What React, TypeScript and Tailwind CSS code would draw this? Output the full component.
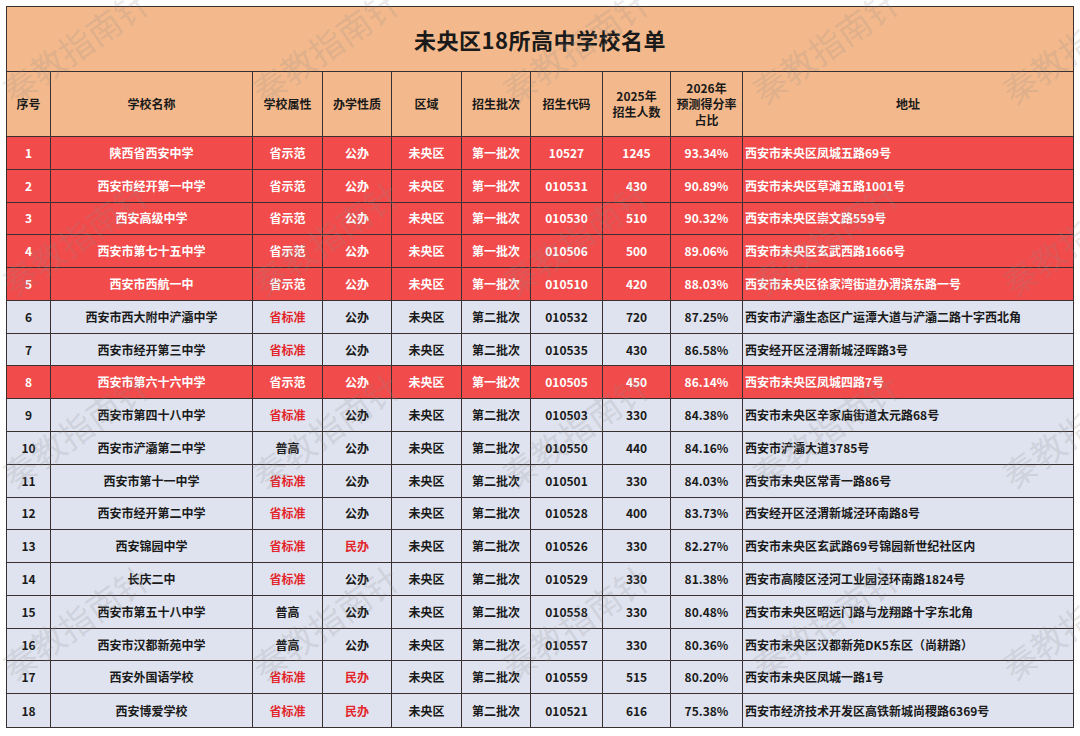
import React from "react";

type Row = {
  n: number;
  name: string;
  attr: string;
  nature: string;
  area: string;
  batch: string;
  code: string;
  count: string;
  rate: string;
  addr: string;
  red: boolean;
};

const rows: Row[] = [
  { n: 1, name: "陕西省西安中学", attr: "省示范", nature: "公办", area: "未央区", batch: "第一批次", code: "10527", count: "1245", rate: "93.34%", addr: "西安市未央区凤城五路69号", red: true },
  { n: 2, name: "西安市经开第一中学", attr: "省示范", nature: "公办", area: "未央区", batch: "第一批次", code: "010531", count: "430", rate: "90.89%", addr: "西安市未央区草滩五路1001号", red: true },
  { n: 3, name: "西安高级中学", attr: "省示范", nature: "公办", area: "未央区", batch: "第一批次", code: "010530", count: "510", rate: "90.32%", addr: "西安市未央区崇文路559号", red: true },
  { n: 4, name: "西安市第七十五中学", attr: "省示范", nature: "公办", area: "未央区", batch: "第一批次", code: "010506", count: "500", rate: "89.06%", addr: "西安市未央区玄武西路1666号", red: true },
  { n: 5, name: "西安市西航一中", attr: "省示范", nature: "公办", area: "未央区", batch: "第一批次", code: "010510", count: "420", rate: "88.03%", addr: "西安市未央区徐家湾街道办渭滨东路一号", red: true },
  { n: 6, name: "西安市西大附中浐灞中学", attr: "省标准", nature: "公办", area: "未央区", batch: "第二批次", code: "010532", count: "720", rate: "87.25%", addr: "西安市浐灞生态区广运潭大道与浐灞二路十字西北角", red: false },
  { n: 7, name: "西安市经开第三中学", attr: "省标准", nature: "公办", area: "未央区", batch: "第二批次", code: "010535", count: "430", rate: "86.58%", addr: "西安经开区泾渭新城泾晖路3号", red: false },
  { n: 8, name: "西安市第六十六中学", attr: "省示范", nature: "公办", area: "未央区", batch: "第一批次", code: "010505", count: "450", rate: "86.14%", addr: "西安市未央区凤城四路7号", red: true },
  { n: 9, name: "西安市第四十八中学", attr: "省标准", nature: "公办", area: "未央区", batch: "第二批次", code: "010503", count: "330", rate: "84.38%", addr: "西安市未央区辛家庙街道太元路68号", red: false },
  { n: 10, name: "西安市浐灞第二中学", attr: "普高", nature: "公办", area: "未央区", batch: "第二批次", code: "010550", count: "440", rate: "84.16%", addr: "西安市浐灞大道3785号", red: false },
  { n: 11, name: "西安市第十一中学", attr: "省标准", nature: "公办", area: "未央区", batch: "第二批次", code: "010501", count: "330", rate: "84.03%", addr: "西安市未央区常青一路86号", red: false },
  { n: 12, name: "西安市经开第二中学", attr: "省标准", nature: "公办", area: "未央区", batch: "第二批次", code: "010528", count: "400", rate: "83.73%", addr: "西安经开区泾渭新城泾环南路8号", red: false },
  { n: 13, name: "西安锦园中学", attr: "省标准", nature: "民办", area: "未央区", batch: "第二批次", code: "010526", count: "330", rate: "82.27%", addr: "西安市未央区玄武路69号锦园新世纪社区内", red: false },
  { n: 14, name: "长庆二中", attr: "省标准", nature: "公办", area: "未央区", batch: "第二批次", code: "010529", count: "330", rate: "81.38%", addr: "西安市高陵区泾河工业园泾环南路1824号", red: false },
  { n: 15, name: "西安市第五十八中学", attr: "普高", nature: "公办", area: "未央区", batch: "第二批次", code: "010558", count: "330", rate: "80.48%", addr: "西安市未央区昭远门路与龙翔路十字东北角", red: false },
  { n: 16, name: "西安市汉都新苑中学", attr: "普高", nature: "公办", area: "未央区", batch: "第二批次", code: "010557", count: "330", rate: "80.36%", addr: "西安市未央区汉都新苑DK5东区（尚耕路）", red: false },
  { n: 17, name: "西安外国语学校", attr: "省标准", nature: "民办", area: "未央区", batch: "第二批次", code: "010559", count: "515", rate: "80.20%", addr: "西安市未央区凤城一路1号", red: false },
  { n: 18, name: "西安博爱学校", attr: "省标准", nature: "民办", area: "未央区", batch: "第二批次", code: "010521", count: "616", rate: "75.38%", addr: "西安市经济技术开发区高铁新城尚稷路6369号", red: false },
];

const cols = "grid grid-cols-[44px_202px_70px_69px_70px_69px_72px_68px_72px_minmax(0,1fr)]";

const marks: [number, number][] = [];
for (let r = 0; r < 4; r++) {
  for (let c = 0; c < 5; c++) {
    marks.push([c * 250 - 10, r * 192 + 20]);
  }
}

function Cell({
  children,
  last,
  className = "",
}: {
  children: React.ReactNode;
  last?: boolean;
  className?: string;
}) {
  return (
    <div
      className={`flex items-center ${last ? "justify-start pl-[2px]" : "justify-center border-r border-[#3a3030]"} ${className}`}
    >
      {children}
    </div>
  );
}

export default function App() {
  return (
    <div
      className="relative w-[1080px] h-[736px] bg-white overflow-hidden p-[6px]"
      style={{ fontFamily: '"Noto Sans CJK SC", "Noto Sans", sans-serif' }}
    >
      <div className="w-[1068px] border border-[#3a3030] font-bold">
        <div className="h-[65px] bg-[#f3b98c] border-b border-[#3a3030] flex items-center justify-center text-[22px] text-[#1a1a1a] tracking-[0.5px]">
          未央区18所高中学校名单
        </div>
        <div className={`${cols} h-[65px] bg-[#f3b98c] border-b border-[#3a3030] text-[12px] leading-[16px] text-[#1a1a1a]`}>
          <Cell>序号</Cell>
          <Cell>学校名称</Cell>
          <Cell>学校属性</Cell>
          <Cell>办学性质</Cell>
          <Cell>区域</Cell>
          <Cell>招生批次</Cell>
          <Cell>招生代码</Cell>
          <Cell>
            <div className="text-center">
              2025年
              <br />
              招生人数
            </div>
          </Cell>
          <Cell>
            <div className="text-center">
              2026年
              <br />
              预测得分率
              <br />
              占比
            </div>
          </Cell>
          <div className="flex items-center justify-center">地址</div>
        </div>
        <div className="grid grid-rows-[repeat(18,minmax(0,1fr))] h-[590px] text-[12px]">
          {rows.map((r, i) => {
            const base = r.red ? "bg-[#f24b4b] text-white" : "bg-[#dfe3ef] text-[#1a1a1a]";
            const redTxt = r.red ? "" : "text-[#e3262b]";
            return (
              <div
                key={r.n}
                className={`${cols} ${base} ${i < rows.length - 1 ? "border-b border-[#3a3030]" : ""}`}
              >
                <Cell>{r.n}</Cell>
                <Cell>{r.name}</Cell>
                <Cell className={r.attr === "省标准" ? redTxt : ""}>{r.attr}</Cell>
                <Cell className={r.nature === "民办" ? redTxt : ""}>{r.nature}</Cell>
                <Cell>{r.area}</Cell>
                <Cell>{r.batch}</Cell>
                <Cell>{r.code}</Cell>
                <Cell>{r.count}</Cell>
                <Cell>{r.rate}</Cell>
                <Cell last>{r.addr}</Cell>
              </div>
            );
          })}
        </div>
      </div>
      {marks.map(([x, y], i) => (
        <div
          key={i}
          aria-hidden="true"
          className="pointer-events-none absolute text-[34px] font-normal text-[#8a8a8a]/20 -rotate-[35deg] whitespace-nowrap"
          style={{ left: x, top: y }}
        >
          秦教指南针
        </div>
      ))}
    </div>
  );
}
